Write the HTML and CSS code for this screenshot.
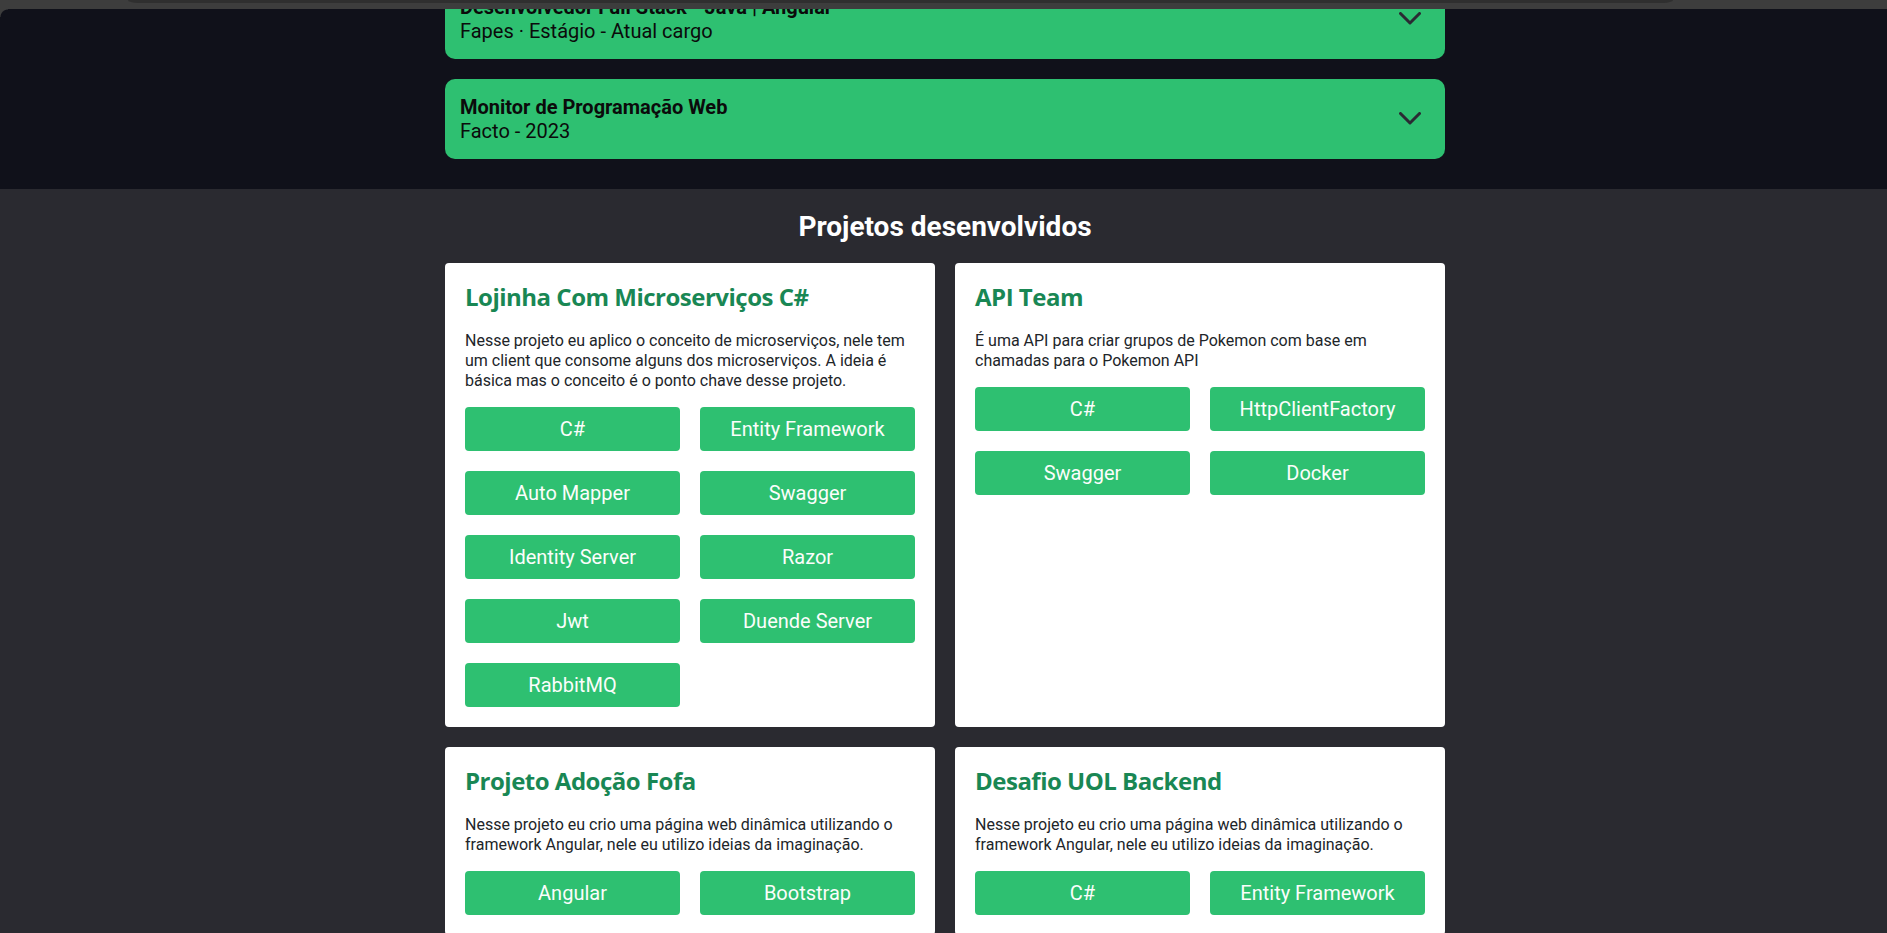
FILE: index.html
```html
<!DOCTYPE html>
<html lang="pt-BR">
<head>
<meta charset="utf-8">
<title>Portfólio</title>
<link rel="stylesheet" href="styles.css">
</head>
<body>
<div class="chrome"><div class="chrome-pill"></div></div>
<div class="chrome-corner"></div>
<main class="page">
  <section class="experience">
    <div class="container exp-list">
      <div class="exp-card">
        <div class="exp-text">
          <div class="exp-title">Desenvolvedor Full Stack - Java | Angular</div>
          <div class="exp-sub">Fapes · Estágio - Atual cargo</div>
        </div>
        <svg class="chevron" width="22" height="14" viewBox="0 0 22 14"><polyline points="1.5,1.5 11,11 20.5,1.5" fill="none" stroke="#2a2a33" stroke-width="3" stroke-linecap="round" stroke-linejoin="round"/></svg>
      </div>
      <div class="exp-card">
        <div class="exp-text">
          <div class="exp-title">Monitor de Programação Web</div>
          <div class="exp-sub">Facto - 2023</div>
        </div>
        <svg class="chevron" width="22" height="14" viewBox="0 0 22 14"><polyline points="1.5,1.5 11,11 20.5,1.5" fill="none" stroke="#2a2a33" stroke-width="3" stroke-linecap="round" stroke-linejoin="round"/></svg>
      </div>
    </div>
  </section>

  <section class="projects">
    <h2 class="projects-title">Projetos desenvolvidos</h2>
    <div class="container project-grid">
      <article class="project-card">
        <h3 class="project-name">Lojinha Com Microserviços C#</h3>
        <p class="project-desc">Nesse projeto eu aplico o conceito de microserviços, nele tem um client que consome alguns dos microserviços. A ideia é básica mas o conceito é o ponto chave desse projeto.</p>
        <div class="tags">
          <span class="tag">C#</span>
          <span class="tag">Entity Framework</span>
          <span class="tag">Auto Mapper</span>
          <span class="tag">Swagger</span>
          <span class="tag">Identity Server</span>
          <span class="tag">Razor</span>
          <span class="tag">Jwt</span>
          <span class="tag">Duende Server</span>
          <span class="tag">RabbitMQ</span>
        </div>
      </article>
      <article class="project-card">
        <h3 class="project-name">API Team</h3>
        <p class="project-desc">É uma API para criar grupos de Pokemon com base em chamadas para o Pokemon API</p>
        <div class="tags">
          <span class="tag">C#</span>
          <span class="tag">HttpClientFactory</span>
          <span class="tag">Swagger</span>
          <span class="tag">Docker</span>
        </div>
      </article>
      <article class="project-card">
        <h3 class="project-name">Projeto Adoção Fofa</h3>
        <p class="project-desc">Nesse projeto eu crio uma página web dinâmica utilizando o framework Angular, nele eu utilizo ideias da imaginação.</p>
        <div class="tags">
          <span class="tag">Angular</span>
          <span class="tag">Bootstrap</span>
        </div>
      </article>
      <article class="project-card">
        <h3 class="project-name">Desafio UOL Backend</h3>
        <p class="project-desc">Nesse projeto eu crio uma página web dinâmica utilizando o framework Angular, nele eu utilizo ideias da imaginação.</p>
        <div class="tags">
          <span class="tag">C#</span>
          <span class="tag">Entity Framework</span>
        </div>
      </article>
    </div>
  </section>
</main>
</body>
</html>
```

FILE: styles.css
```css
* { box-sizing: border-box; }

html, body {
  margin: 0;
  padding: 0;
  background: #2a2a30;
}

body {
  font-family: Roboto, "Liberation Sans", sans-serif;
  color: #212529;
}

.chrome {
  position: fixed;
  top: 0;
  left: 0;
  right: 0;
  height: 9px;
  background: #3d3d3d;
  z-index: 10;
}

.chrome-pill {
  margin: 0 214px 0 128px;
  height: 3px;
  background: #2f2f2f;
  border-radius: 0 0 10px 10px / 0 0 3px 3px;
}

.chrome-corner {
  position: fixed;
  top: 9px;
  left: 0;
  width: 8px;
  height: 8px;
  background: radial-gradient(circle at 8px 8px, rgba(61,61,61,0) 7px, #3d3d3d 8px);
  z-index: 10;
}

.page {
  padding-left: 3px;
}

.container {
  width: 1000px;
  margin: 0 auto;
}

.experience {
  background: #10111a;
  margin: -21px 0 0 -3px;
  padding: 0 0 30px 3px;
}

.exp-list {
  display: flex;
  flex-direction: column;
  gap: 20px;
}

.exp-card {
  height: 80px;
  background: #2ec071;
  border-radius: 10px;
  padding: 0 24px 0 15px;
  display: flex;
  align-items: center;
  justify-content: space-between;
  color: #0b0b0b;
}

.exp-title {
  font-size: 20px;
  font-weight: 700;
  line-height: 24px;
}

.exp-sub {
  font-size: 20px;
  line-height: 24px;
}

.chevron {
  display: block;
  flex: none;
}

.projects {
  padding: 23px 0 40px;
}

.projects-title {
  margin: 0 0 21px;
  text-align: center;
  color: #ffffff;
  font-size: 28px;
  line-height: 30px;
  font-weight: 700;
}

.project-grid {
  display: grid;
  grid-template-columns: 490px 490px;
  gap: 20px;
}

.project-card {
  background: #ffffff;
  border-radius: 4px;
  padding: 20px;
}

.project-name {
  margin: 0 0 19px;
  font-family: "Open Sans", "Noto Sans", sans-serif;
  font-size: 24px;
  line-height: 1.2;
  font-weight: 700;
  letter-spacing: -0.5px;
  color: #198754;
}

.project-desc {
  margin: 0 0 16px;
  font-size: 16px;
  line-height: 20px;
  color: #212529;
}

.tags {
  display: grid;
  grid-template-columns: 215px 215px;
  gap: 20px;
}

.tag {
  height: 44px;
  display: flex;
  align-items: center;
  justify-content: center;
  background: #2ec071;
  color: #fbfdfb;
  border-radius: 4px;
  font-size: 20px;
}
```
